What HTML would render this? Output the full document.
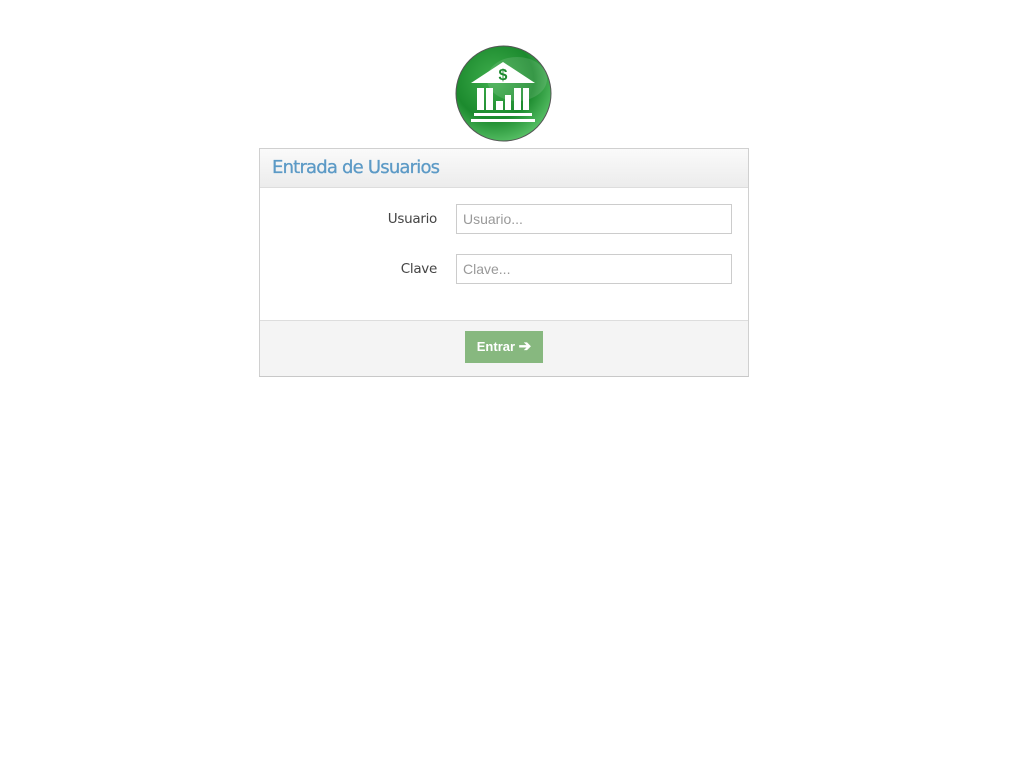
<!DOCTYPE html>
<html><head><meta charset="utf-8"><style>
body{margin:0;background:#fff;font-family:"DejaVu Sans","Liberation Sans",sans-serif;}
.logo{position:absolute;left:455px;top:45px;width:97px;height:97px;}
.panel{position:absolute;left:259px;top:148px;width:488px;height:226px;border:1px solid #d0d0d0;border-bottom:2px solid #c8c8c8;}
.hd{height:38px;border-bottom:1px solid #ddd;background:linear-gradient(#fafafa,#ececec);}
.hd span{position:absolute;left:12px;top:8px;font-size:18px;color:#5c9ac6;letter-spacing:-0.8px;-webkit-text-stroke:0.3px #5c9ac6}
.lbl{position:absolute;right:311px;font-size:13.5px;color:#444;letter-spacing:-0.3px}
.inp{position:absolute;left:196px;width:276px;height:30px;border:1px solid #ccc;box-sizing:border-box;font-family:"Liberation Sans",sans-serif;font-size:14px;color:#999;padding:6px 6px;}
.ft{position:absolute;left:0;top:171px;width:488px;height:55px;background:#f4f4f4;border-top:1px solid #ddd;}
.btn{position:absolute;left:205px;top:10px;width:78px;height:32px;background:#87b87f;color:#fff;font-family:"Liberation Sans",sans-serif;font-size:13px;font-weight:bold;line-height:32px;text-align:center;}
</style></head><body>
<svg class="logo" viewBox="0 0 97 97">
<defs><radialGradient id="g" cx="0.4" cy="0.35" r="0.7"><stop offset="0" stop-color="#3fae4d"/><stop offset="0.6" stop-color="#1c8a2e"/><stop offset="1" stop-color="#5cc46a"/></radialGradient></defs>
<circle cx="48.5" cy="48.5" r="47.5" fill="url(#g)" stroke="#555" stroke-width="1"/>
<ellipse cx="62" cy="34" rx="30" ry="22" fill="#fff" opacity="0.12"/>
<polygon points="48,17 16,38 80,38" fill="#fff"/>
<text x="48" y="35" font-size="16" font-weight="bold" fill="#1c8a2e" text-anchor="middle" font-family="Liberation Sans">$</text>
<rect x="22" y="43" width="7" height="22" fill="#fff"/><rect x="31" y="43" width="7" height="22" fill="#fff"/>
<rect x="41" y="56" width="7" height="9" fill="#fff"/><rect x="50" y="50" width="6" height="15" fill="#fff"/>
<rect x="59" y="43" width="7" height="22" fill="#fff"/><rect x="68" y="43" width="6" height="22" fill="#fff"/>
<rect x="19" y="68" width="58" height="3" fill="#fff"/><rect x="16" y="74" width="64" height="3" fill="#fff"/>
</svg>
<div class="panel">
<div class="hd"><span>Entrada de Usuarios</span></div>
<div class="lbl" style="top:62px">Usuario</div>
<div class="inp" style="top:55px">Usuario...</div>
<div class="lbl" style="top:112px">Clave</div>
<div class="inp" style="top:105px">Clave...</div>
<div class="ft"><div class="btn">Entrar <span style="font-size:15px">➔</span></div></div>
</div>
</body></html>
